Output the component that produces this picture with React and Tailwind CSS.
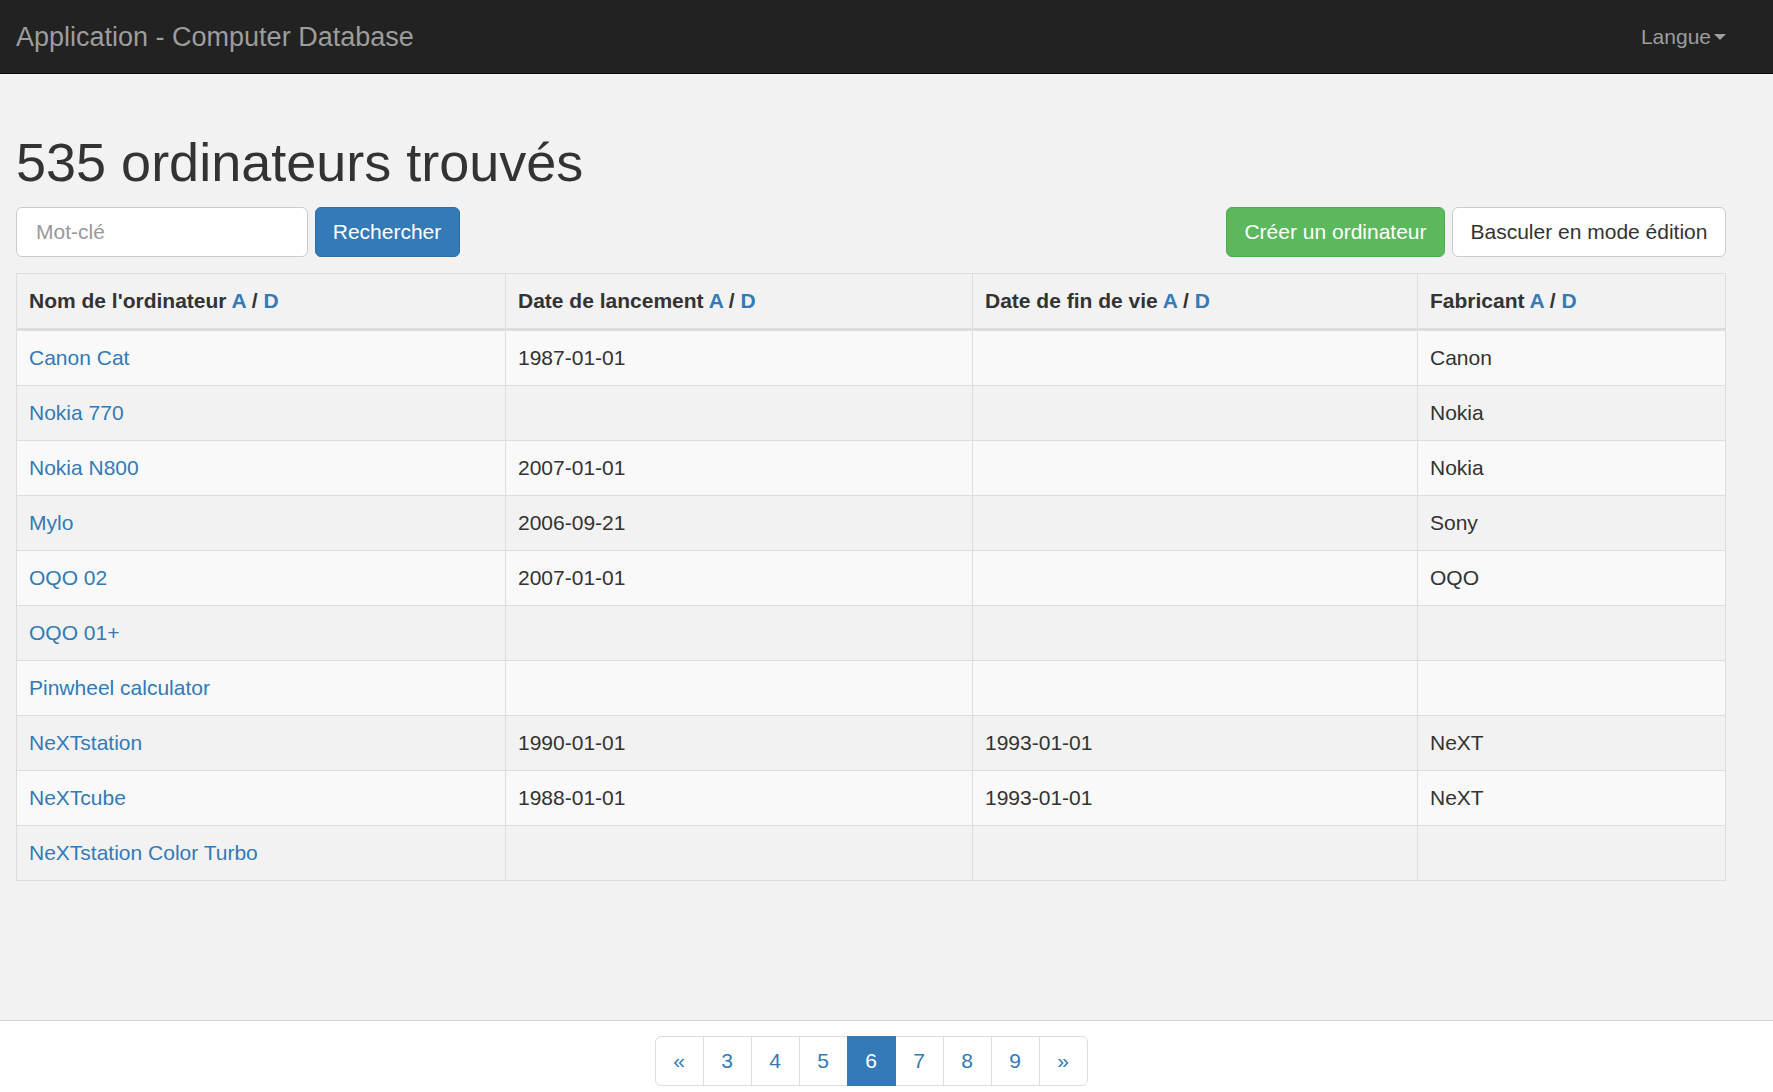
import React from "react";

const computers = [
  { name: "Canon Cat", intro: "1987-01-01", disc: "", company: "Canon" },
  { name: "Nokia 770", intro: "", disc: "", company: "Nokia" },
  { name: "Nokia N800", intro: "2007-01-01", disc: "", company: "Nokia" },
  { name: "Mylo", intro: "2006-09-21", disc: "", company: "Sony" },
  { name: "OQO 02", intro: "2007-01-01", disc: "", company: "OQO" },
  { name: "OQO 01+", intro: "", disc: "", company: "" },
  { name: "Pinwheel calculator", intro: "", disc: "", company: "" },
  { name: "NeXTstation", intro: "1990-01-01", disc: "1993-01-01", company: "NeXT" },
  { name: "NeXTcube", intro: "1988-01-01", disc: "1993-01-01", company: "NeXT" },
  { name: "NeXTstation Color Turbo", intro: "", disc: "", company: "" },
];

const columns = [
  "Nom de l'ordinateur",
  "Date de lancement",
  "Date de fin de vie",
  "Fabricant",
];

const pages = ["«", "3", "4", "5", "6", "7", "8", "9", "»"];

function SortLinks() {
  return (
    <>
      {" "}
      <a className="text-[#337ab7]">A</a> / <a className="text-[#337ab7]">D</a>
    </>
  );
}

function App() {
  return (
    <div className="h-screen flex flex-col bg-[#f2f2f2] text-[#333] font-['Liberation_Sans',Arial,sans-serif] text-[21px] leading-[30px]">
      {/* top navbar */}
      <nav className="h-[74px] shrink-0 bg-[#222] border-b border-[#080808] flex items-center justify-between pl-[16px] pr-[47px]">
        <a className="text-[27px] text-[#9d9d9d] leading-[30px]">
          Application - Computer Database
        </a>
        <div className="flex items-center text-[#9d9d9d] text-[21px]">
          Langue
          <span className="ml-[3px] w-0 h-0 border-t-[6px] border-t-[#9d9d9d] border-x-[6px] border-x-transparent" />
        </div>
      </nav>

      <main className="flex-1 pl-[16px] pr-[47px]">
        <h1 className="mt-[59px] mb-[15px] text-[54px] leading-[59.4px] font-normal">
          535 ordinateurs trouvés
        </h1>

        <div className="flex justify-between">
          <form className="flex gap-[6.5px]" onSubmit={(e) => e.preventDefault()}>
            <input
              placeholder="Mot-clé"
              className="w-[292px] h-[50px] px-[19px] bg-white border border-[#ccc] rounded-[6px] text-[21px] placeholder:text-[#999] outline-none"
            />
            <button className="h-[50px] w-[145px] bg-[#337ab7] border border-[#2e6da4] rounded-[6px] text-white text-[21px]">
              Rechercher
            </button>
          </form>
          <div className="flex gap-[7px]">
            <button className="h-[50px] w-[219px] bg-[#5cb85c] border border-[#4cae4c] rounded-[6px] text-white text-[21px]">
              Créer un ordinateur
            </button>
            <button className="h-[50px] w-[274px] bg-white border border-[#ccc] rounded-[6px] text-[#333] text-[21px]">
              Basculer en mode édition
            </button>
          </div>
        </div>

        <table className="mt-[16px] w-full table-fixed border-collapse border border-[#ddd]">
          <colgroup>
            <col className="w-[489px]" />
            <col className="w-[467px]" />
            <col className="w-[445px]" />
            <col />
          </colgroup>
          <thead>
            <tr>
              {columns.map((col) => (
                <th
                  key={col}
                  className="text-left font-bold px-[12px] py-[12px] leading-[30px] border border-[#ddd] border-b-[3px] align-bottom"
                >
                  {col}
                  <SortLinks />
                </th>
              ))}
            </tr>
          </thead>
          <tbody>
            {computers.map((c, i) => (
              <tr key={c.name} className={i % 2 === 0 ? "bg-[#f9f9f9]" : ""}>
                <td className="px-[12px] py-[12px] h-[55px] border border-[#ddd]">
                  <a className="text-[#337ab7]">{c.name}</a>
                </td>
                <td className="px-[12px] py-[12px] border border-[#ddd]">{c.intro}</td>
                <td className="px-[12px] py-[12px] border border-[#ddd]">{c.disc}</td>
                <td className="px-[12px] py-[12px] border border-[#ddd]">{c.company}</td>
              </tr>
            ))}
          </tbody>
        </table>
      </main>

      {/* bottom pagination bar */}
      <footer className="h-[72px] shrink-0 bg-white border-t border-[#d5d5d5] flex justify-center pl-[16px] pr-[47px]">
        <ul className="flex mt-[15px] h-[50px]">
          {pages.map((p, i) => {
            const active = p === "6";
            return (
              <li
                key={p}
                className={
                  "w-[49px] h-[50px] flex items-center justify-center border text-[21px] " +
                  (i > 0 ? "-ml-px " : "") +
                  (i === 0 ? "rounded-l-[6px] " : "") +
                  (i === pages.length - 1 ? "rounded-r-[6px] " : "") +
                  (active
                    ? "bg-[#337ab7] border-[#337ab7] text-white relative z-10"
                    : "bg-white border-[#ddd] text-[#337ab7]")
                }
              >
                {p}
              </li>
            );
          })}
        </ul>
      </footer>
    </div>
  );
}

export default App;
